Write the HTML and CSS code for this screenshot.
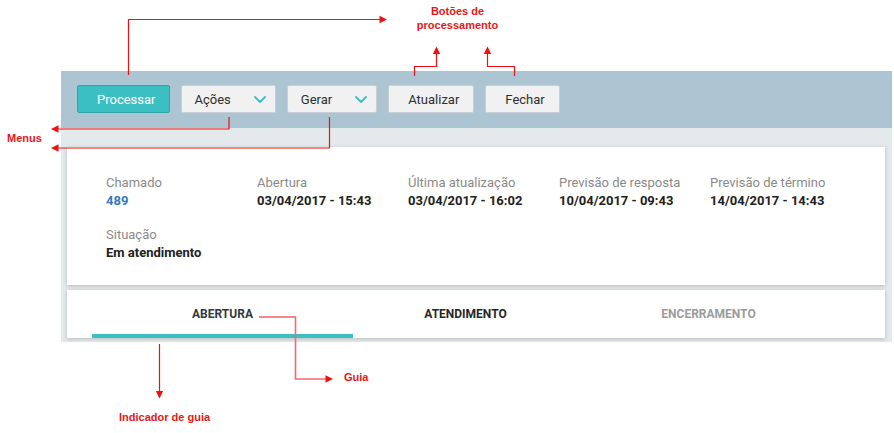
FILE: index.html
```html
<!DOCTYPE html>
<html lang="pt-BR">
<head>
<meta charset="utf-8">
<title>Chamado 489</title>
<link rel="stylesheet" href="styles.css">
</head>
<body>
<div class="frame">
  <div class="toolbar">
    <button class="btn btn-primary">Processar</button>
    <button class="btn btn-menu">Ações
      <svg class="chev" width="12" height="7" viewBox="0 0 12 7"><polyline points="1,1 6,6 11,1"/></svg>
    </button>
    <button class="btn btn-menu">Gerar
      <svg class="chev" width="12" height="7" viewBox="0 0 12 7"><polyline points="1,1 6,6 11,1"/></svg>
    </button>
    <button class="btn">Atualizar</button>
    <button class="btn">Fechar</button>
  </div>
  <div class="content">
    <div class="card details">
      <div class="field"><div class="label">Chamado</div><div class="value value-link">489</div></div>
      <div class="field"><div class="label">Abertura</div><div class="value">03/04/2017 - 15:43</div></div>
      <div class="field"><div class="label">Última atualização</div><div class="value">03/04/2017 - 16:02</div></div>
      <div class="field"><div class="label">Previsão de resposta</div><div class="value">10/04/2017 - 09:43</div></div>
      <div class="field"><div class="label">Previsão de término</div><div class="value">14/04/2017 - 14:43</div></div>
      <div class="field"><div class="label">Situação</div><div class="value">Em atendimento</div></div>
    </div>
    <div class="card tabs">
      <div class="tab tab-active">ABERTURA</div>
      <div class="tab">ATENDIMENTO</div>
      <div class="tab tab-disabled">ENCERRAMENTO</div>
    </div>
  </div>
</div>

<svg class="annotations" width="894" height="433" viewBox="0 0 894 433">
  <g class="ann-line">
    <path d="M128.5 75 V19.5 H381"/>
    <path d="M414.5 76 V66.5 H436.5 V53"/>
    <path d="M514.5 76 V66.5 H487.5 V53"/>
    <path d="M229 117 V129 H57"/>
    <path d="M329.5 117 V148 H57"/>
    <path d="M259 317 H296"/>
    <path d="M159.5 344 V392"/>
  </g>
  <path class="ann-soft" d="M295.5 317 V379 H327"/>
  <g class="ann-head">
    <polygon points="387,19.5 379.5,15.8 379.5,23.2"/>
    <polygon points="436.5,46.5 432.8,54 440.2,54"/>
    <polygon points="487.5,46.5 483.8,54 491.2,54"/>
    <polygon points="51,129 58.5,125.3 58.5,132.7"/>
    <polygon points="51,148 58.5,144.3 58.5,151.7"/>
    <polygon points="333,379 325.5,375.3 325.5,382.7"/>
    <polygon points="159.5,398.5 155.8,391 163.2,391"/>
  </g>
</svg>
<div class="note note-botoes">Botões de<br>processamento</div>
<div class="note note-menus">Menus</div>
<div class="note note-guia">Guia</div>
<div class="note note-indicador">Indicador de guia</div>
</body>
</html>
```
FILE: styles.css
```css
* { box-sizing: border-box; }

body {
  margin: 0;
  background: #ffffff;
  font-family: Roboto, "Liberation Sans", Arial, sans-serif;
  position: relative;
  width: 894px;
  height: 433px;
  overflow: hidden;
}

.frame {
  margin: 71px 0 0 61px;
  width: 831px;
  background: #e4e9ec;
  display: flex;
  flex-direction: column;
}

.toolbar {
  height: 57px;
  background: #adc5d2;
  padding: 14px 0 0 16px;
  display: flex;
  align-items: flex-start;
  gap: 11px;
}

.btn {
  height: 28px;
  display: inline-flex;
  align-items: center;
  padding: 0 14px 0 19px;
  font-family: Roboto, "Liberation Sans", Arial, sans-serif;
  font-size: 13px;
  color: #2e2e2e;
  background: #f1f1f1;
  border: 1px solid #c6cfd4;
  border-radius: 2px;
  cursor: pointer;
}

.btn-primary {
  background: #3cbfc2;
  border-color: #2fa3a6;
  color: #ffffff;
  padding: 0 13px 0 19px;
}

.btn-menu {
  padding: 0 9px 0 13px;
  gap: 23px;
}

.chev {
  display: block;
  fill: none;
  stroke: #3cbfc2;
  stroke-width: 1.8;
  stroke-linecap: round;
  stroke-linejoin: round;
}

.content {
  padding: 19px 7px 4px 6px;
  display: flex;
  flex-direction: column;
  gap: 5px;
}

.card {
  background: #ffffff;
  box-shadow: 0 1px 4px rgba(0, 0, 0, 0.2);
}

.details {
  padding: 27px 0 23px 39px;
  display: grid;
  grid-template-columns: repeat(5, 151px);
  row-gap: 16px;
}

.label {
  font-size: 13px;
  line-height: 18px;
  color: #8a8a8a;
  white-space: nowrap;
}

.value {
  font-size: 13px;
  line-height: 18px;
  font-weight: 700;
  color: #212121;
  white-space: nowrap;
}

.value-link {
  color: #3579c2;
}

.tabs {
  height: 48px;
  display: flex;
  padding-left: 34px;
}

.tab {
  position: relative;
  width: 243px;
  text-align: center;
  line-height: 48px;
  font-size: 12px;
  font-weight: 700;
  color: #262626;
}

.tab-active {
  color: #333a3d;
}

.tab-active::after {
  content: "";
  position: absolute;
  left: -9px;
  right: -9px;
  bottom: 0;
  height: 4px;
  background: #3cbfc2;
}

.tab-disabled {
  color: #9b9b9b;
}

/* Annotation overlay */
.annotations {
  position: absolute;
  left: 0;
  top: 0;
  pointer-events: none;
}

.ann-line path {
  fill: none;
  stroke: #f01010;
  stroke-width: 1.2;
}

.ann-soft {
  fill: none;
  stroke: #f36a6a;
  stroke-width: 1.6;
}

.ann-head polygon {
  fill: #f01010;
}

.note {
  position: absolute;
  font-family: "Liberation Sans", Arial, sans-serif;
  font-weight: 700;
  font-size: 11px;
  line-height: 14px;
  color: #ec1515;
  white-space: nowrap;
}

.note-botoes {
  left: 407px;
  top: 4px;
  width: 101px;
  text-align: center;
}

.note-menus {
  left: 7px;
  top: 131px;
}

.note-guia {
  left: 344px;
  top: 370px;
}

.note-indicador {
  left: 119px;
  top: 410px;
}
```
